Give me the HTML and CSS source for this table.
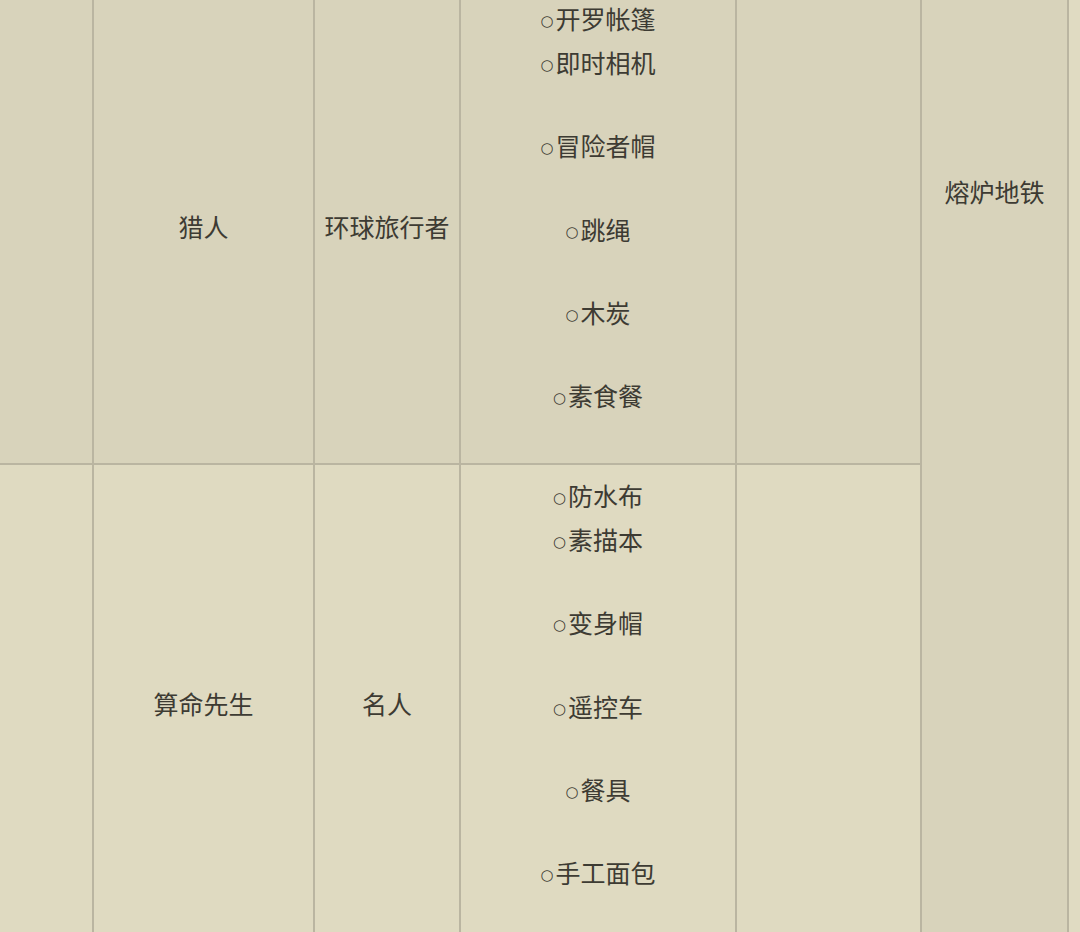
FILE: index.html
```html
<!DOCTYPE html>
<html lang="zh">
<head>
<meta charset="utf-8">
<link rel="stylesheet" href="styles.css">
</head>
<body>
<div class="viewport">
  <table class="grid">
    <colgroup>
      <col class="w0"><col class="w1"><col class="w2"><col class="w3"><col class="w4"><col class="w5"><col class="w6">
    </colgroup>
    <tr class="row-a">
      <td class="first"></td>
      <td class="mid">猎人</td>
      <td class="mid">环球旅行者</td>
      <td class="list">
        <div class="item"><span class="dot">○</span>开罗帐篷</div>
        <div class="item"><span class="dot">○</span>即时相机</div>
        <div class="item sp"><span class="dot">○</span>冒险者帽</div>
        <div class="item sp"><span class="dot">○</span>跳绳</div>
        <div class="item sp"><span class="dot">○</span>木炭</div>
        <div class="item sp"><span class="dot">○</span>素食餐</div>
      </td>
      <td></td>
      <td class="subway" rowspan="2">熔炉地铁</td>
      <td class="edge" rowspan="2"></td>
    </tr>
    <tr class="row-b">
      <td class="first"></td>
      <td class="mid">算命先生</td>
      <td class="mid">名人</td>
      <td class="list">
        <div class="item"><span class="dot">○</span>防水布</div>
        <div class="item"><span class="dot">○</span>素描本</div>
        <div class="item sp"><span class="dot">○</span>变身帽</div>
        <div class="item sp"><span class="dot">○</span>遥控车</div>
        <div class="item sp"><span class="dot">○</span>餐具</div>
        <div class="item sp"><span class="dot">○</span>手工面包</div>
      </td>
      <td></td>
    </tr>
  </table>
</div>
</body>
</html>
```
FILE: styles.css
```css
html, body {
  margin: 0;
  padding: 0;
  background: #dfdac1;
}
.viewport {
  width: 1080px;
  height: 932px;
  overflow: hidden;
}
.grid {
  margin-top: -12px;
  border-collapse: collapse;
  table-layout: fixed;
  width: 1128px;
  font-family: "Noto Sans CJK SC", "Noto Sans", sans-serif;
  font-size: 25px;
  color: #3d3b33;
}
.w0 { width: 93px; }
.w1 { width: 221px; }
.w2 { width: 146px; }
.w3 { width: 276px; }
.w4 { width: 185px; }
.w5 { width: 147px; }
.w6 { width: 60px; }
.grid td {
  border: 2px solid #bab5a1;
  padding: 0;
  text-align: center;
  vertical-align: middle;
  line-height: 44px;
}
.grid td.first { border-left: none; }
.row-a { height: 476px; background: #d8d3bb; }
.row-b { height: 476px; background: #dfdac1; }
.row-a td { border-top: none; }
.row-b td { border-bottom: none; }
.grid td.list {
  vertical-align: top;
  padding-top: 8px;
}
.item { height: 44px; line-height: 44px; white-space: nowrap; }
.item.sp { margin-top: 39.3px; }
.dot {
  font-family: "DejaVu Sans", sans-serif;
  font-size: 15px;
  font-weight: bold;
  line-height: 0;
  margin-right: 2px;
  position: relative;
  top: -3px;
}
.grid td.subway {
  background: #d8d3bb;
  vertical-align: top;
  padding-top: 181px;
}
.grid td.edge {
  background: #e0dbc2;
  border-right: none;
}
```
